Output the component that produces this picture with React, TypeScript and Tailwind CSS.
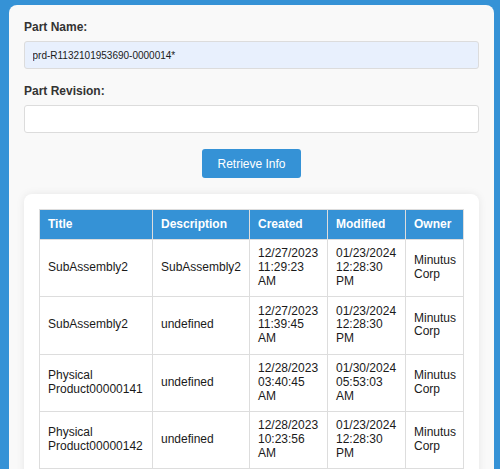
import React from 'react'

interface PartRow {
  title: string
  description: string
  created: string
  modified: string
  owner: string
}

const rows: PartRow[] = [
  { title: 'SubAssembly2', description: 'SubAssembly2', created: '12/27/2023 11:29:23 AM', modified: '01/23/2024 12:28:30 PM', owner: 'Minutus Corp' },
  { title: 'SubAssembly2', description: 'undefined', created: '12/27/2023 11:39:45 AM', modified: '01/23/2024 12:28:30 PM', owner: 'Minutus Corp' },
  { title: 'Physical Product00000141', description: 'undefined', created: '12/28/2023 03:40:45 AM', modified: '01/30/2024 05:53:03 AM', owner: 'Minutus Corp' },
  { title: 'Physical Product00000142', description: 'undefined', created: '12/28/2023 10:23:56 AM', modified: '01/23/2024 12:28:30 PM', owner: 'Minutus Corp' },
]

const cell = 'border border-[#dddddd] px-[8px] py-[7.5px] align-middle'

export default function App() {
  return (
    <div
      className="min-h-screen bg-[#3592d6] pt-[5px] pl-[9px] pr-[6px] pb-4"
      style={{ fontFamily: '"Liberation Sans", Arial, sans-serif' }}
    >
      <div className="rounded-lg bg-[#f9f9f9] px-[15px] pt-[15px] pb-[15px]">
        {/* Form */}
        <label className="block text-[12px] leading-[14px] font-bold text-[#333] mb-[7px]">Part Name:</label>
        <input
          className="block w-full h-[28px] rounded-[3px] border border-[#dcdcdc] bg-[#e8f0fd] px-[7.5px] text-[10px] text-[#1a1a1a] outline-none"
          defaultValue="prd-R1132101953690-0000014*"
        />
        <label className="block text-[12px] leading-[14px] font-bold text-[#333] mt-[15px] mb-[7px]">Part Revision:</label>
        <input className="block w-full h-[28px] rounded-[3px] border border-[#dcdcdc] bg-white px-[7.5px] text-[10px] outline-none" />

        <div className="flex justify-center mt-4">
          <button className="h-[29px] rounded-[3px] bg-[#3592d6] px-[15px] text-[12px] text-white">Retrieve Info</button>
        </div>

        {/* Results */}
        <div className="mt-4 rounded-lg bg-white p-[15px] shadow-[0_0_8px_rgba(0,0,0,0.08)]">
          <table className="w-full table-fixed border-collapse text-[12px] leading-[13.8px] text-[#1a1a1a]">
            <colgroup>
              <col className="w-[113px]" />
              <col className="w-[97px]" />
              <col className="w-[78px]" />
              <col className="w-[78px]" />
              <col />
            </colgroup>
            <thead>
              <tr className="bg-[#3592d6] text-white">
                {['Title', 'Description', 'Created', 'Modified', 'Owner'].map((h) => (
                  <th key={h} className="border border-[#dddddd] px-[8px] py-[7.5px] text-left font-bold">
                    {h}
                  </th>
                ))}
              </tr>
            </thead>
            <tbody>
              {rows.map((r, i) => (
                <tr key={i}>
                  <td className={cell}>{r.title}</td>
                  <td className={cell}>{r.description}</td>
                  <td className={cell}>{r.created}</td>
                  <td className={cell}>{r.modified}</td>
                  <td className={cell}>{r.owner}</td>
                </tr>
              ))}
            </tbody>
          </table>
        </div>
      </div>
    </div>
  )
}
